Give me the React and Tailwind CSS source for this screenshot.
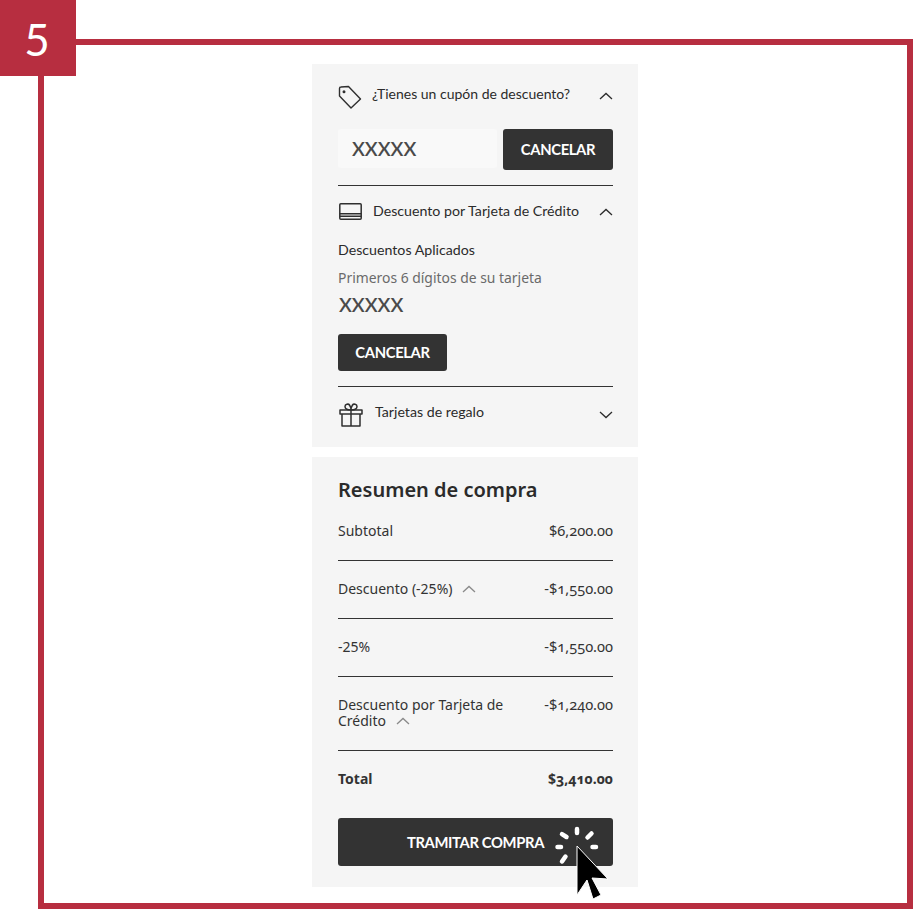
const LATO = "font-['Lato',sans-serif]";
const BODY = "font-['Noto_Sans',sans-serif]";

function Chevron({ up = true, className = "" }) {
  return (
    <svg width="14" height="8" viewBox="0 0 14 8" fill="none" stroke="currentColor" strokeWidth="1.3" className={className}>
      <path d={up ? "M1 7l6-5.5L13 7" : "M1 1l6 5.5L13 1"} />
    </svg>
  );
}

function TagIcon() {
  return (
    <svg width="24" height="24" viewBox="0 0 24 24" fill="none" stroke="#2f2f2f" strokeWidth="1.4" strokeLinejoin="round">
      <path d="M1.500 3.500Q1.500 2 3 2L10.500 1.500 22.500 14 13 23 1.500 11z" />
      <circle cx="6" cy="6.700" r="0.8" fill="#2f2f2f" />
    </svg>
  );
}

function CardIcon() {
  return (
    <svg width="23" height="17" viewBox="0 0 23 17" fill="none" stroke="#2f2f2f" strokeWidth="1.500" className="ml-[1px]">
      <rect x="0.800" y="0.800" width="21.400" height="15.400" rx="1" />
      <path d="M0.800 10.800h21.400M0.800 13.300h21.400" />
    </svg>
  );
}

function GiftIcon() {
  return (
    <svg width="24" height="24" viewBox="0 0 24 24" fill="none" stroke="#2f2f2f" strokeWidth="1.500" strokeLinejoin="round" className="ml-[1px]">
      <path d="M1 7h22v4H1zM3 11v12h18V11M12 7v16" />
      <path d="M12 7C9 7 6 6 6 3.500S9.500 .500 10.500 2 12 5 12 7zM12 7c3 0 6-1 6-3.500S14.500 .500 13.500 2 12 5 12 7z" />
    </svg>
  );
}

function CursorBurst() {
  return (
    <svg width="60" height="78" viewBox="0 0 60 78" className="absolute left-[553px] top-[824px]">
      <g stroke="#fff" strokeWidth="4.500" strokeLinecap="round">
        <path d="M24 5v4M9 10.200l4.500 2.800M34.500 13.500l4-4M4.500 23h3.500M39.500 23h3.500M9 37.500l3.500-5" />
      </g>
      <path d="M24 22v49l10-15 6 19 8-4-9-17 16 1z" fill="#000" stroke="#fff" strokeWidth="1" strokeLinejoin="round" />
    </svg>
  );
}

function DarkButton({ children, className = "" }) {
  return (
    <div className={`flex items-center justify-center rounded-[3px] bg-[#333333] text-[14.8px] font-bold tracking-tight text-white ${LATO} ${className}`}>
      {children}
    </div>
  );
}

function AccordionHead({ icon, label, up = true, gap = "gap-3", labelClass = "mb-[5px] text-[14.2px]", chevronClass = "mb-[1px]" }) {
  return (
    <div className={`flex items-center justify-between ${LATO}`}>
      <div className={`flex items-center ${gap}`}>
        {icon}
        <span className={`leading-5 text-[#2b2b2b] ${labelClass}`}>{label}</span>
      </div>
      <Chevron up={up} className={`text-[#2b2b2b] ${chevronClass}`} />
    </div>
  );
}

function SummaryRow({ label, value, className = "" }) {
  return (
    <div className={`flex items-start justify-between border-b border-[#333333] ${className}`}>
      <div className="w-[180px] text-[14px] leading-4 text-[#333333]">{label}</div>
      <div className="-mt-[1px] text-[14.6px] leading-4 text-[#333333] oldstyle-nums">{value}</div>
    </div>
  );
}

export default function App() {
  return (
    <div className={`relative h-[909px] w-[913px] overflow-hidden bg-white pl-[38px] pt-[39px] ${BODY}`}>
      {/* frame */}
      <div className="h-[870px] w-[875px] border-[6px] border-[#b72e40]" />
      <div className="absolute left-0 top-0 flex h-[76px] w-[76px] items-center justify-center bg-[#b72e40] pr-[2px] pt-[1px] font-['Lato',sans-serif] text-[44px] font-normal leading-none text-white">
        5
      </div>

      <div className="absolute left-[312px] top-[64px] flex w-[326px] flex-col gap-[10px]">
        <section className="h-[383px] bg-[#f5f5f5] pl-[26px] pr-[25px] pt-[20px]">
          <AccordionHead
            icon={<TagIcon />}
            label="¿Tienes un cupón de descuento?"
            gap="gap-[10px]"
            labelClass="mb-[5px] text-[14px]"
          />
          <div className="mt-[20px] flex justify-between border-b border-[#333333] pb-[15px]">
            <div className={`flex h-[39px] w-[159px] items-center rounded-[3px] bg-[#f9f9f9] pl-[14px] text-[19.500px] font-semibold text-[#4a4a4a] ${LATO}`}>
              XXXXX
            </div>
            <DarkButton className="h-[41px] w-[110px]">CANCELAR</DarkButton>
          </div>
          <div className="mt-[15px]">
            <AccordionHead
              icon={<CardIcon />}
              label="Descuento por Tarjeta de Crédito"
              gap="gap-[11px]"
              labelClass="mb-[1px] text-[14.2px]"
              chevronClass=""
            />
          </div>
          <div className={`mt-[18px] text-[14.2px] leading-5 text-[#2b2b2b] ${LATO}`}>Descuentos Aplicados</div>
          <div className="mt-[8px] text-[13.9px] leading-5 text-[#6a6a6a]">Primeros 6 dígitos de su tarjeta</div>
          <div className={`mt-[3px] pl-[1px] text-[19.500px] font-semibold leading-7 text-[#4a4a4a] ${LATO}`}>XXXXX</div>
          <div className="mt-[15px] border-b border-[#333333] pb-[15px]">
            <DarkButton className="h-[37px] w-[109px]">CANCELAR</DarkButton>
          </div>
          <div className="mt-[15px]">
            <AccordionHead icon={<GiftIcon />} label="Tarjetas de regalo" up={false} labelClass="mb-[6px] text-[14.2px]" />
          </div>
        </section>

        <section className="h-[430px] bg-[#f5f5f5] pl-[26px] pr-[25px] pt-[19px]">
          <h2 className="text-[20px] font-semibold leading-7 text-[#2b2b2b]">Resumen de compra</h2>
          <SummaryRow className="mt-[19px] h-[38px]" label="Subtotal" value="$6,200.00" />
          <SummaryRow
            className="h-[58px] pt-[20px]"
            label={
              <span className="flex items-center gap-[10px]">
                Descuento (-25%)
                <Chevron className="text-[#8a8a8a]" />
              </span>
            }
            value="-$1,550.00"
          />
          <SummaryRow className="h-[58px] pt-[20px]" label="-25%" value="-$1,550.00" />
          <SummaryRow
            className="h-[74px] pt-[20px]"
            label={
              <>
                Descuento por Tarjeta de
                <span className="flex items-center gap-[10px]">
                  Crédito
                  <Chevron className="text-[#8a8a8a]" />
                </span>
              </>
            }
            value="-$1,240.00"
          />
          <div className="mt-[20px] flex justify-between text-[14px] font-bold leading-4 text-[#333333]">
            <span>Total</span>
            <span className="oldstyle-nums">$3,410.00</span>
          </div>
          <DarkButton className="mt-[31px] h-[48px]">TRAMITAR COMPRA</DarkButton>
        </section>
      </div>

      <CursorBurst />
    </div>
  );
}
